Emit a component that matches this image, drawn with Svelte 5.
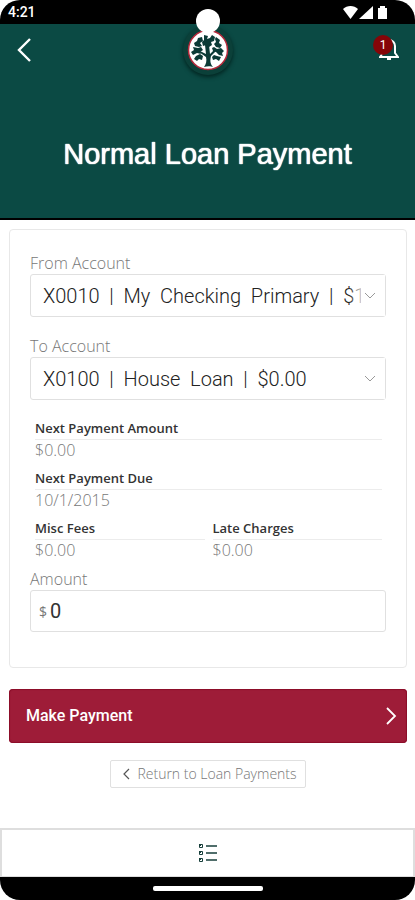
<script lang="ts">
  const nb = '\u00a0\u00a0';

  function accountLabel(words: string[]) {
    return words.join(nb);
  }

  const fromAccounts = [
    { id: 'X0010', label: accountLabel(['X0010', '|', 'My', 'Checking', 'Primary', '|', '$1']) }
  ];
  const toAccounts = [
    { id: 'X0100', label: accountLabel(['X0100', '|', 'House', 'Loan', '|', '$0.00']) }
  ];

  const details = [
    { name: 'Next Payment Amount', value: '$0.00', wide: true },
    { name: 'Next Payment Due', value: '10/1/2015', wide: true },
    { name: 'Misc Fees', value: '$0.00', wide: false },
    { name: 'Late Charges', value: '$0.00', wide: false }
  ];

  let from = $state('X0010');
  let to = $state('X0100');
  let amount = $state('0');
</script>

<div class="screen">
  <div class="status-bar">
    <span class="time">4:21</span>
    <svg class="status-icons" width="46" height="16" viewBox="0 0 46 16" fill="#fff" aria-hidden="true">
      <path d="M0 5C4 1 11 1 15 5L7.5 15z" />
      <path d="M30 2v13H16z" />
      <path d="M37 2h5v2h2v11h-9V4h2z" />
    </svg>
    <span class="camera"></span>
  </div>

  <header class="header">
    <div class="toolbar">
      <button class="icon-button" aria-label="Back">
        <svg width="16" height="26" viewBox="0 0 16 26" fill="none" stroke="#fff" stroke-width="2.4">
          <path d="M14 2L3 13l11 11" />
        </svg>
      </button>

      <div class="logo">
        <svg width="42" height="42" viewBox="0 0 42 42" aria-hidden="true">
          <circle cx="21" cy="21" r="19.5" fill="#fff" stroke="#b5293b" stroke-width="1.5" />
          <g fill="#0b3a36">
            <path d="M17 38c2-3 3-6 2-10l-7-5 1-1 6 3-1-9h4l1 9 5-5 2 1-6 6c-1 4-1 8 2 11-2-1-6-1-9 0z" />
            <path d="M17 6l4 1-1 3 3-1 2-3 3 2-1 4-3 1 1 3-3 2-3-2-3 1-1-4 2-2z" />
            <path d="M11 9l4-1 1 4-3 2 2 3-3 1-4-1-1-3 3-2zM29 8l4 3-1 3 3 2-2 3-4-1-2-3 2-2-1-3z" />
            <path d="M6 18l5 1 3-1 2 3-3 2 1 2-4-1-4 2-2-3 3-2zM27 18l3 2 4-1 3 3-2 2 1 3-4-1-3-3-3-1-1-3z" />
            <path d="M9 27l4-2 3 2-1 4-3-1-2 2-3-2zM27 26l3 1 4 1-2 4-3-2-3 1-1-3z" />
          </g>
        </svg>
      </div>

      <button class="icon-button alerts" aria-label="Alerts">
        <svg width="20" height="24" viewBox="0 0 20 24" fill="none" stroke="#fff" stroke-width="2">
          <path d="M4 15V8a6 6 0 0 1 12 0v7l3 4H1z" />
          <path d="M8 20h4v2H8z" fill="#fff" stroke="none" />
        </svg>
        <span class="badge">1</span>
      </button>
    </div>
    <h1>Normal Loan Payment</h1>
  </header>

  <main>
    <form class="card" id="payment" onsubmit={(e) => e.preventDefault()}>
      <label for="from">From Account</label>
      <div class="select">
        <select id="from" bind:value={from}>
          {#each fromAccounts as account}
            <option value={account.id}>{account.label}</option>
          {/each}
        </select>
        <span class="arrow">
          <svg width="12" height="8" viewBox="0 0 12 8" fill="none" stroke="#999"><path d="M1 1l5 5 5-5" /></svg>
        </span>
      </div>

      <label for="to">To Account</label>
      <div class="select">
        <select id="to" bind:value={to}>
          {#each toAccounts as account}
            <option value={account.id}>{account.label}</option>
          {/each}
        </select>
        <span class="arrow">
          <svg width="12" height="8" viewBox="0 0 12 8" fill="none" stroke="#999"><path d="M1 1l5 5 5-5" /></svg>
        </span>
      </div>

      <dl class="details">
        {#each details as item}
          <div class:wide={item.wide}>
            <dt>{item.name}</dt>
            <dd>{item.value}</dd>
          </div>
        {/each}
      </dl>

      <label for="amount">Amount</label>
      <div class="amount">
        <span>$</span>
        <input id="amount" type="text" inputmode="decimal" bind:value={amount} />
      </div>
    </form>

    <button class="submit" type="submit" form="payment">
      Make Payment
      <svg width="11" height="18" viewBox="0 0 11 18" fill="none" stroke="#fff" stroke-width="1.8">
        <path d="M1 1l8 8-8 8" />
      </svg>
    </button>

    <a class="return" href="#loan-payments">
      <svg width="7" height="12" viewBox="0 0 7 12" fill="none" stroke="#555" stroke-width="1.2">
        <path d="M6 1L1 6l5 5" />
      </svg>
      Return to Loan Payments
    </a>
  </main>

  <nav>
    <button class="icon-button" aria-label="Menu">
      <svg width="20" height="20" viewBox="0 0 20 20" fill="none" stroke="#173f3b">
        <path d="M1.5 1.5h3v3h-3zM1.5 8.5h3v3h-3zM1.5 15.5h3v3h-3z" />
        <path d="M1 1h2v2H1zM1 8h2v2H1zM1 15h2v2H1z" fill="#173f3b" stroke="none" />
        <path d="M8 3h11M8 10h11M8 17h11" stroke-width="1.5" />
      </svg>
    </button>
  </nav>
  <div class="home-bar"><span></span></div>
</div>

<style>
  :global(body) {
    background: #fff;
  }

  .screen {
    display: flex;
    flex-direction: column;
    min-height: 100vh;
    font-family: 'Open Sans', sans-serif;
  }

  button {
    font: inherit;
    border: 0;
    cursor: pointer;
  }

  .status-bar {
    position: relative;
    display: flex;
    justify-content: space-between;
    align-items: center;
    height: 24px;
    padding: 0 26px 0 8px;
    background: #000;
    border-radius: 20px 20px 0 0;
    color: #fff;
  }

  .time {
    font: 500 14px/26px Roboto, sans-serif;
  }

  .camera {
    position: absolute;
    z-index: 2;
    top: 9px;
    left: 50%;
    width: 24px;
    height: 24px;
    margin-left: -12px;
    border-radius: 50%;
    background: #fff;
  }

  .header {
    display: flex;
    flex-direction: column;
    height: 194px;
    background: #0b4a44;
    border-bottom: 2px solid #000;
  }

  .toolbar {
    display: grid;
    grid-template-columns: 1fr auto 1fr;
    align-items: center;
    height: 52px;
    padding: 0 16px;
  }

  .icon-button {
    display: flex;
    justify-self: start;
    padding: 0;
    background: none;
  }

  .logo {
    display: flex;
    padding: 4px;
    border-radius: 50%;
    background: #0b4039;
    box-shadow: 0 2px 4px #022420;
  }

  .alerts {
    position: relative;
    justify-self: end;
  }

  .badge {
    position: absolute;
    top: -3px;
    left: -6px;
    width: 20px;
    height: 20px;
    border-radius: 50%;
    background: #850508;
    color: #fff;
    font: 12px/20px Roboto, sans-serif;
    text-align: center;
  }

  h1 {
    margin: 60px 0 0;
    color: #fff;
    font: 400 29px/36px 'Liberation Sans', sans-serif;
    text-align: center;
    text-shadow: 0 0 1px #fff, 0 0 1px #fff;
  }

  main {
    display: flex;
    flex: 1;
    flex-direction: column;
    padding: 9px 8px 0 9px;
  }

  .card {
    padding: 22px 20px 35px;
    border: 1px solid #e8e8e8;
    border-radius: 4px;
  }

  label {
    display: block;
    color: #777;
    font-size: 16px;
    font-weight: 300;
    line-height: 22px;
  }

  .select {
    position: relative;
    margin-bottom: 18px;
  }

  select {
    display: block;
    width: 100%;
    height: 43px;
    padding: 0 24px 0 12px;
    border: 1px solid #e0e0e0;
    border-radius: 3px;
    background: #fff;
    color: #222;
    font: 300 20px/40px Roboto, sans-serif;
    appearance: none;
  }

  .arrow {
    position: absolute;
    top: 1px;
    right: 1px;
    bottom: 1px;
    display: flex;
    align-items: center;
    justify-content: flex-end;
    width: 36px;
    padding-right: 9px;
    box-sizing: border-box;
    background: linear-gradient(to right, transparent, #fff 16px);
    pointer-events: none;
  }

  .details {
    display: grid;
    grid-template-columns: 1fr 1fr;
    column-gap: 8px;
    margin: 0 4px 0 5px;
  }

  .wide {
    grid-column: span 2;
  }

  dt {
    padding-bottom: 1px;
    border-bottom: 1px solid #ececec;
    color: #333;
    font-size: 13px;
    font-weight: 600;
    line-height: 20px;
  }

  dd {
    margin: 0 0 7px;
    color: #777;
    font-size: 16px;
    font-weight: 300;
    line-height: 21px;
  }

  .amount {
    display: flex;
    align-items: center;
    gap: 3px;
    height: 40px;
    padding: 0 8px;
    border: 1px solid #e0e0e0;
    border-radius: 3px;
    color: #777;
    font-size: 14px;
  }

  input {
    flex: 1;
    min-width: 0;
    padding: 0;
    border: 0;
    outline: 0;
    color: #333;
    font: 400 20px/24px Roboto, sans-serif;
  }

  .submit {
    display: flex;
    align-items: center;
    justify-content: space-between;
    height: 54px;
    margin-top: 21px;
    padding: 0 10px 0 17px;
    border-radius: 4px;
    background: #9e1c38;
    box-shadow: inset 0 0 1px 1px #8a0d29;
    color: #fff;
    font: 500 16px/24px Roboto, sans-serif;
  }

  .return {
    display: flex;
    align-items: center;
    align-self: center;
    gap: 7px;
    margin-top: 17px;
    padding: 0 8px 0 12px;
    border: 1px solid #e0e0e0;
    border-radius: 2px;
    color: #777;
    font-size: 14px;
    font-weight: 300;
    line-height: 26px;
    text-decoration: none;
  }

  nav {
    display: flex;
    align-items: center;
    justify-content: center;
    height: 46px;
    border: 2px solid #dedede;
    border-bottom-width: 1px;
  }

  .home-bar {
    display: flex;
    align-items: center;
    justify-content: center;
    height: 23px;
    background: #000;
    border-radius: 0 0 20px 20px;
  }

  .home-bar span {
    width: 110px;
    height: 5px;
    border-radius: 2px;
    background: #fff;
  }
</style>
